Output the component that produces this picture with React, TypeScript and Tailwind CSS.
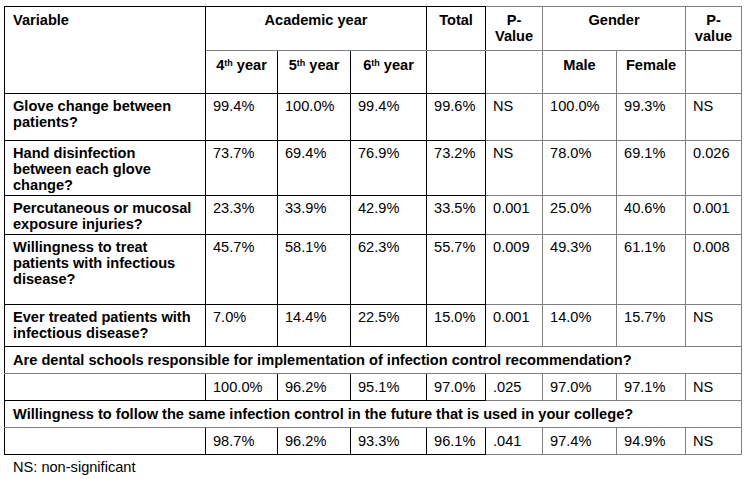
import { Fragment } from "react";

const rows = [
  { label: "Glove change between patients?", v: ["99.4%", "100.0%", "99.4%", "99.6%", "NS", "100.0%", "99.3%", "NS"], h: "h-[47px]" },
  { label: "Hand disinfection between each glove change?", v: ["73.7%", "69.4%", "76.9%", "73.2%", "NS", "78.0%", "69.1%", "0.026"], h: "h-[55px]" },
  { label: "Percutaneous or mucosal exposure injuries?", v: ["23.3%", "33.9%", "42.9%", "33.5%", "0.001", "25.0%", "40.6%", "0.001"], h: "h-[39px]" },
  { label: "Willingness to treat patients with infectious disease?", v: ["45.7%", "58.1%", "62.3%", "55.7%", "0.009", "49.3%", "61.1%", "0.008"], h: "h-[70px]" },
  { label: "Ever treated patients with infectious disease?", v: ["7.0%", "14.4%", "22.5%", "15.0%", "0.001", "14.0%", "15.7%", "NS"], h: "h-[42px]" },
];

const spanRows = [
  {
    q: "Are dental schools responsible for implementation of infection control recommendation?",
    v: ["100.0%", "96.2%", "95.1%", "97.0%", ".025", "97.0%", "97.1%", "NS"],
  },
  {
    q: "Willingness to follow the same infection control in the future that is used in your college?",
    v: ["98.7%", "96.2%", "93.3%", "96.1%", ".041", "97.4%", "94.9%", "NS"],
  },
];

// first five columns are ruled in black, the rest in grey
const dark = "border border-black";
const grey = "border border-[#808080]";
const cellBorder = (i: number) => (i < 4 ? dark : grey);

export default function App() {
  return (
    <div className="w-[746px] h-[479px] bg-white text-black pl-[4px] pt-[6px] font-['Liberation_Sans',Arial,sans-serif] text-[14.6px] leading-[16px]">
      <table className="w-[737px] table-fixed border-collapse">
        <colgroup>
          <col className="w-[201px]" />
          <col className="w-[72px]" />
          <col className="w-[73px]" />
          <col className="w-[76px]" />
          <col className="w-[59px]" />
          <col className="w-[57px]" />
          <col className="w-[74px]" />
          <col className="w-[69px]" />
          <col className="w-[56px]" />
        </colgroup>
        <tbody>
          <tr className="h-[44px] font-bold">
            <td rowSpan={2} className={`${dark} align-top pl-[8px] pt-[5px]`}>Variable</td>
            <td colSpan={3} className={`${dark} border-b-[#808080] align-top text-center pt-[5px]`}>Academic year</td>
            <td className={`${dark} border-b-[#808080] align-top text-center pt-[5px]`}>Total</td>
            <td className={`${grey} align-top text-center pt-[5px]`}>P-<br />Value</td>
            <td colSpan={2} className={`${grey} align-top text-center pt-[5px]`}>Gender</td>
            <td className={`${grey} align-top text-center pt-[5px]`}>P-<br />value</td>
          </tr>
          <tr className="h-[43px] font-bold">
            <td className={`${dark} align-top text-center pt-[6px]`}>4<sup className="text-[9px]">th</sup> year</td>
            <td className={`${dark} align-top text-center pt-[6px]`}>5<sup className="text-[9px]">th</sup> year</td>
            <td className={`${dark} align-top text-center pt-[6px]`}>6<sup className="text-[9px]">th</sup> year</td>
            <td className={dark}></td>
            <td className={grey}></td>
            <td className={`${grey} align-top text-center pt-[6px]`}>Male</td>
            <td className={`${grey} align-top text-center pt-[6px]`}>Female</td>
            <td className={grey}></td>
          </tr>
          {rows.map((r) => (
            <tr key={r.label} className={r.h}>
              <td className={`${dark} align-top pl-[8px] pr-[13px] pt-[4px] font-bold`}>{r.label}</td>
              {r.v.map((v, i) => (
                <td key={i} className={`${cellBorder(i)} align-top px-[7px] pt-[4px]`}>{v}</td>
              ))}
            </tr>
          ))}
          {spanRows.map((s) => (
            <Fragment key={s.q}>
              <tr className="h-[27px]">
                <td colSpan={9} className="border border-black border-r-[#808080] border-b-[#808080] align-top px-[8px] pt-[5px] font-bold whitespace-nowrap">
                  {s.q}
                </td>
              </tr>
              <tr className="h-[27px]">
                <td className={dark}></td>
                {s.v.map((v, i) => (
                  <td key={i} className={`${cellBorder(i)} align-top px-[7px] pt-[5px]`}>{v}</td>
                ))}
              </tr>
            </Fragment>
          ))}
        </tbody>
      </table>
      <p className="pl-[9px] pt-[4px]">NS: non-significant</p>
    </div>
  );
}
